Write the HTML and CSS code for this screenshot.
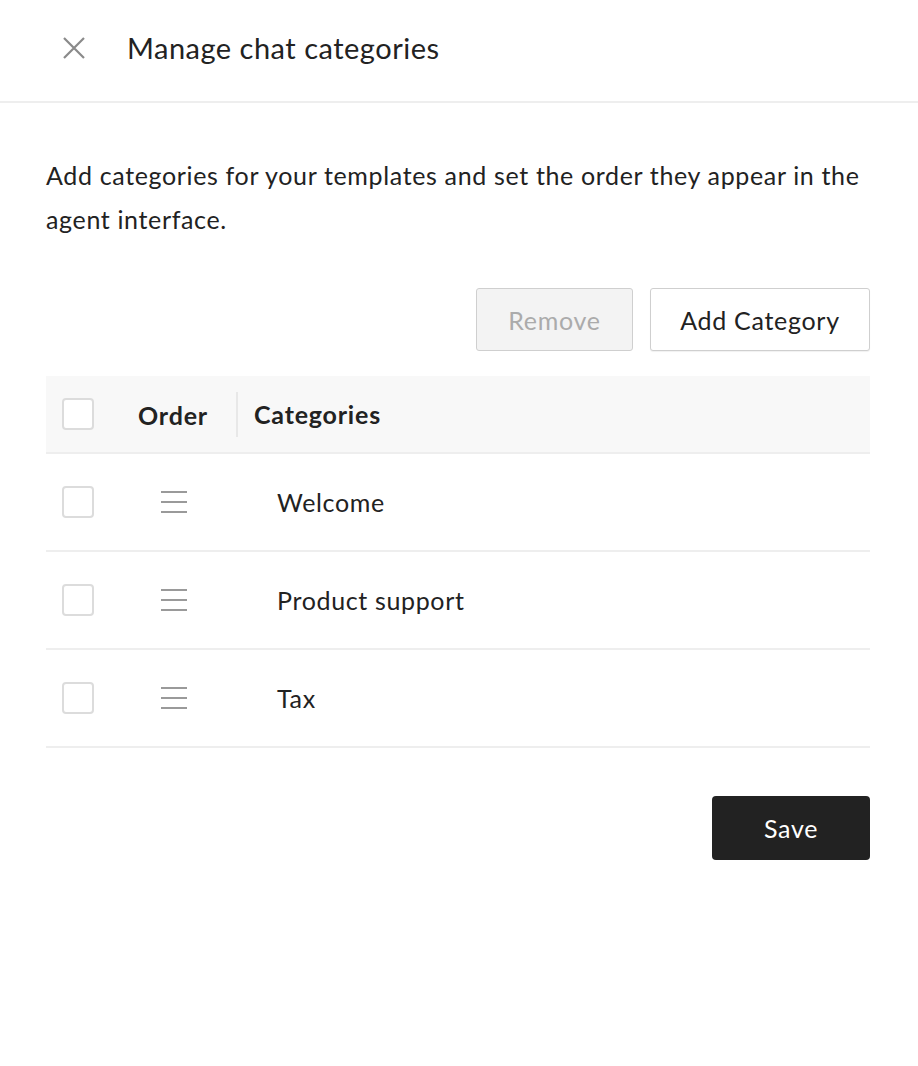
FILE: index.html
```html
<!DOCTYPE html>
<html lang="en">
<head>
<meta charset="utf-8">
<title>Manage chat categories</title>
<link rel="stylesheet" href="styles.css">
</head>
<body>
<header class="topbar">
  <button class="close" aria-label="Close">
    <svg width="24" height="24" viewBox="0 0 24 24"><path d="M2 2 L22 22 M22 2 L2 22" stroke="#8a8a8a" stroke-width="2.2" fill="none"/></svg>
  </button>
  <h1 class="title">Manage chat categories</h1>
</header>
<main class="content">
  <p class="desc">Add categories for your templates and set the order they appear in the agent interface.</p>
  <div class="actions">
    <button class="btn btn-disabled">Remove</button>
    <button class="btn btn-outline">Add Category</button>
  </div>
  <div class="table">
    <div class="row head">
      <div class="cell check"><span class="box"></span></div>
      <div class="cell order"><span class="head-label">Order</span></div>
      <div class="cell name head-name">Categories</div>
    </div>
    <div class="row">
      <div class="cell check"><span class="box"></span></div>
      <div class="cell order"><span class="handle"><i></i><i></i><i></i></span></div>
      <div class="cell name">Welcome</div>
    </div>
    <div class="row">
      <div class="cell check"><span class="box"></span></div>
      <div class="cell order"><span class="handle"><i></i><i></i><i></i></span></div>
      <div class="cell name">Product support</div>
    </div>
    <div class="row">
      <div class="cell check"><span class="box"></span></div>
      <div class="cell order"><span class="handle"><i></i><i></i><i></i></span></div>
      <div class="cell name">Tax</div>
    </div>
  </div>
  <div class="footer">
    <button class="btn btn-dark">Save</button>
  </div>
</main>
</body>
</html>
```
FILE: styles.css
```css
* { box-sizing: border-box; }
body {
  margin: 0;
  background: #fff;
  color: #222;
  font-family: "Lato", "Liberation Sans", sans-serif;
  letter-spacing: 0.65px;
}
.topbar {
  display: flex;
  align-items: center;
  height: 103px;
  padding: 0 0 6px 62px;
  border-bottom: 2px solid #eeeeee;
}
.close {
  display: flex;
  padding: 0;
  border: 0;
  background: none;
  width: 24px;
  height: 24px;
}
.title {
  margin: 0 0 0 41px;
  font-size: 29px;
  font-weight: 400;
  letter-spacing: 0.5px;
  color: #222;
}
.content {
  padding: 50px 48px 0 46px;
}
.desc {
  margin: 0;
  font-size: 25px;
  line-height: 44px;
}
.actions {
  display: flex;
  justify-content: flex-end;
  gap: 17px;
  margin-top: 47px;
}
.btn {
  height: 63px;
  border-radius: 3px;
  font-family: inherit;
  font-size: 25px;
  letter-spacing: 0.7px;
  padding: 0;
  cursor: pointer;
}
.btn-disabled {
  width: 157px;
  background: #f3f3f3;
  border: 1px solid #cfcfcf;
  color: #ababab;
}
.btn-outline {
  width: 220px;
  background: #fff;
  border: 1px solid #cfcfcf;
  color: #222;
  box-shadow: 0 1px 1px rgba(0,0,0,0.06);
}
.table {
  margin-top: 25px;
}
.row {
  display: flex;
  align-items: center;
  height: 98px;
  border-bottom: 2px solid #eeeeee;
}
.row.head {
  height: 78px;
  background: #f8f8f8;
}
.cell { display: flex; align-items: center; }
.check {
  width: 64px;
  justify-content: center;
}
.box {
  width: 32px;
  height: 32px;
  border: 2px solid #dcdcdc;
  border-radius: 4px;
  background: #fff;
}
.order {
  width: 128px;
  justify-content: center;
  align-self: stretch;
}
.head .order {
  border-right: 2px solid #e8e8e8;
  margin: 16px 0 15px;
}
.head-label, .head-name {
  font-weight: 700;
  font-size: 25px;
  letter-spacing: 0.8px;
}
.name {
  font-size: 25px;
  padding-left: 39px;
}
.head-name { padding-left: 16px; }
.handle {
  display: flex;
  flex-direction: column;
  gap: 8px;
  width: 26px;
}
.handle i {
  display: block;
  height: 2px;
  background: #9a9a9a;
}
.footer {
  display: flex;
  justify-content: flex-end;
  margin-top: 48px;
}
.btn-dark {
  width: 158px;
  height: 64px;
  border: 0;
  border-radius: 4px;
  background: #222;
  color: #fff;
}
```
